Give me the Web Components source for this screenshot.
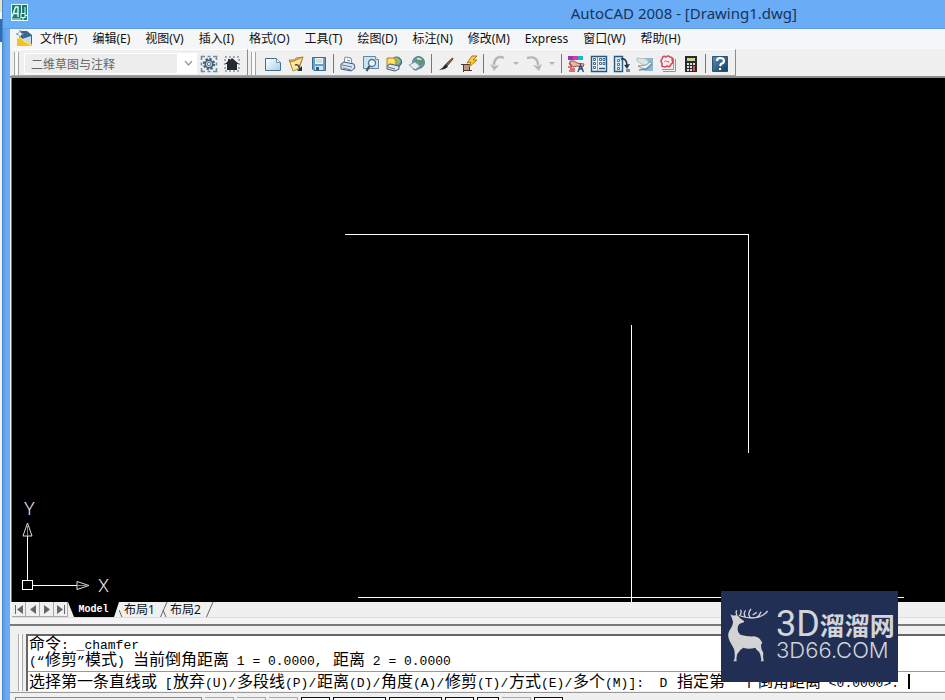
<!DOCTYPE html>
<html lang="zh-CN">
<head>
<meta charset="utf-8">
<title>AutoCAD 2008 - [Drawing1.dwg]</title>
<style>
  html, body { margin: 0; height: 100%; overflow: hidden; }
  body { font: 12px/16px "Noto Sans", "Noto Sans CJK SC", sans-serif; color: #111; background: #eaf3fb; }
</style>
</head>
<body>
<cad-window></cad-window>
<script>
const define = (name, html, setup) => {
  const template = document.createElement('template');
  template.innerHTML = html;
  customElements.define(name, class extends HTMLElement {
    constructor() {
      super();
      this.attachShadow({ mode: 'open' }).append(template.content.cloneNode(true));
    }
    connectedCallback() {
      if (setup && !this.ready) { this.ready = true; setup(this, this.shadowRoot); }
    }
  });
};

const ICONS = {
  app: `<rect x=".5" y=".5" width="16" height="16" fill="#1b7a70" stroke="#dff"/><path d="M1 13 4.500 3H7v10M3 9.500h4" fill="none" stroke="#e6fff8" stroke-width="1.400"/><path d="M10.500 1v8M1 15h9M14 3v6" stroke="#d8f4ee" fill="none"/><rect x="10" y="9.500" width="4" height="4" fill="#126b62" stroke="#fff"/><path d="M14 11.500h3M12 13.500V17" stroke="#fff"/>`,
  doc: `<path d="M5 1h6l5 4v9H5z" fill="#3d668b"/><path d="m6 9 9-3v8H6z" fill="#c4dced"/><path d="M1 8h4l3 3 8 3v2H1z" fill="#f6c21c"/><path d="M1 8h4l3 3 7 4" fill="none" stroke="#fff0a0"/><path d="m4 0 1 3 3 1-3 1-1 3-1-3-3-1 3-1z" fill="#fff" stroke="#4b7ba8" stroke-width=".6"/>`,
  gear: `<path d="M1.500 5V1.500H5M13 1.500h3.500V5M16.500 13v3.500H13M5 16.500H1.500V13M7.500 1.500h3M1.500 7.500v3M16.500 7.500v3M7.500 16.500h3" fill="none" stroke="#6d8da5" stroke-width="1.600"/><circle cx="9" cy="9" r="5" fill="none" stroke="#3e6480" stroke-width="2.400" stroke-dasharray="2.200 1.700"/><circle cx="9" cy="9" r="3.800" fill="#bcd0dd" stroke="#3b5f7c" stroke-width="1.500"/><circle cx="9" cy="9" r="1.600" fill="#f4f8fa" stroke="#5c7a90"/>`,
  home: `<rect x="2" y="2" width="14" height="14" fill="none" stroke="#8b959e" stroke-width="1.500" stroke-dasharray="2 2"/><path d="M2 9 5 6V4h2v1l2-2 7 6h-2v6H4V9z" fill="#252a30"/>`,
  new: `<defs><linearGradient id="n" x2="1" y2="1"><stop stop-color="#fff"/><stop offset="1" stop-color="#a9cfe6"/></linearGradient></defs><path d="M1.500 3.500h11l4 4v8h-15z" fill="url(#n)" stroke="#456f8d"/><path d="M12.500 3.500v4h4" fill="#e9f5fb" stroke="#6a93ad"/>`,
  open: `<path d="M2 5h5l2-2 7-1-4 12H6z" fill="#e9bd55" stroke="#a8883f"/><path d="M3 7 7 6l9-4-5 12-5 2z" fill="#ffe69a" stroke="#b08e3c"/><path d="M8 10c3-1 4 1 5 4" stroke="#3b5058" stroke-width="1.500" fill="none"/><path d="m15 11v5h-5z" fill="#23343c"/>`,
  save: `<path d="M2.500 2.500h13v13H4l-1.500-1.500z" fill="#6c9fc6" stroke="#376b90"/><path d="M5 3h8v6H5z" fill="#eef6fa"/><path d="M6 5h6M6 7h6" stroke="#b3cbd8"/><path d="M5 11h8v4H5z" fill="#d3e4ed"/><path d="M6 12h3v3H6z" fill="#2f5a7a"/>`,
  print: `<path d="m5 8 1-6 6 1 1 6z" fill="#fff" stroke="#6f87a0"/><path d="m2 9 3-2 10 2 1 4-4 3-10-2z" fill="#dbe3ee" stroke="#43597a"/><path d="m3 10 10 2M4 13l8 2M8 5l3 1" stroke="#6279a0"/>`,
  preview: `<path d="M1.500 1.500h12l3 3v9h-15z" fill="#cde5f2" stroke="#5b86a4"/><path d="M13.500 1.500v3h3" fill="#fff" stroke="#6e94ac"/><circle cx="10" cy="8" r="3.500" fill="#e6f6fc" stroke="#587488" stroke-width="1.300"/><path d="m7.500 11-3 5" stroke="#40586a" stroke-width="2.300"/>`,
  publish: `<circle cx="11.500" cy="7" r="5" fill="#5799bd" stroke="#275173"/><path d="m9 3 3-1 4 4-3 4-3-2z" fill="#92ba76"/><path d="M2 3h7l2 3v5H2z" fill="#ffd646" stroke="#b08a2c"/><path d="M4 5h5M4 7h5" stroke="#fff5a8"/><path d="m2 11 3-2 9 2v3l-4 2-8-2z" fill="#dfe6ee" stroke="#43597a"/><path d="m3 12 7 2" stroke="#5b7390"/>`,
  web: `<circle cx="10.500" cy="7.500" r="6" fill="#6a9fba" stroke="#53778f"/><path d="M7 4q4-3 7 0l2 3-3 5-3-1 1-3-4-1z" fill="#5f9571"/><path d="m1 10 6-3 5 4-5 4z" fill="#e4ecf1" stroke="#8ca4b2"/><path d="m5 14 3 1 5-3" stroke="#6e90a4" fill="none" stroke-width="1.500"/><path d="M9 4q3-1 4 1" stroke="#dfefe8" fill="none" stroke-width="1.500"/>`,
  brush: `<path d="m15.500 3-6.500 6 1.500 1.500L16 4z" fill="#8a6a48" stroke="#5a4334"/><path d="m8.500 9 2.500 2.500q-2 3-9 3.500 4-2 6.500-6z" fill="#2b2a29"/>`,
  block: `<rect x="3.500" y="9.500" width="6" height="6" fill="#c79379" stroke="#443b39"/><path d="M1 9.500h3M3.500 16v1M9.500 15.500H12" stroke="#443b39"/><path d="m12 1-5 7 4-1-2 5 8-7h-4l4-4z" fill="#ffd22e" stroke="#a87428"/>`,
  undo: `<path d="M15 3C8 0 5 5 5 10" fill="none" stroke="#b4b6b8" stroke-width="2.400"/><path d="m1 9 4 7 5-6-5 1z" fill="#b4b6b8"/>`,
  redo: `<path d="M2 3c7-2 11 1 11 7" fill="none" stroke="#b4b6b8" stroke-width="2.400"/><path d="m8 10 6 6 3-7-4 2z" fill="#b4b6b8"/>`,
  props: `<path d="M1 1h5v4H1z" fill="#933bb1"/><path d="M6 1h5v4H6z" fill="#ed2ca8"/><path d="M11 1h5v4h-5z" fill="#16bac3"/><path d="M3 6h4l3 2 7 1-1 3-6-1-4 1-3-2z" fill="#eeb79d" stroke="#885451"/><path d="m2 8 3 3M1 12h4M2 16h6M3 14h5" stroke="#cc4949" stroke-width="1.500"/><path d="m11 17 2.500-7 3 7M12 14h4" stroke="#2c4f7e" fill="none" stroke-width="1.500"/>`,
  grid: `<path d="M1.500 1.500h15v15h-15z" fill="#eef6fb" stroke="#28597d" stroke-width="1.400"/><path d="M7.500 2v14" stroke="#7298b2"/><g fill="#fff" stroke="#3f6d90"><path d="M3.500 3.500h2v2h-2zM3.500 7.500h2v2h-2zM3.500 11.500h2v2h-2zM9.500 3.500h2v2h-2zM13 3.500h2v2h-2zM9.500 7.500h2v2h-2zM13 7.500h2v2h-2z"/></g><path d="M9 13.500h6" stroke="#28577a" stroke-width="1.500"/>`,
  palette: `<path d="M1.500 1.500h8v15h-8z" fill="#deedf6" stroke="#285a7e" stroke-width="1.400"/><path d="M4.500 4.500h2v2h-2zM4.500 8.500h2v2h-2zM4.500 12.500h2v2h-2z" fill="#fff" stroke="#4b7899"/><path d="M8 4c4-1 6 2 6 7" fill="none" stroke="#173d5b" stroke-width="1.700"/><path d="m11 10 3 4 3-5" fill="#173d5b"/><path d="M13 14h4v3h-4z" fill="#6c90a8"/>`,
  sheet: `<path d="M5 3h12v13H8z" fill="#8fb8cd"/><path d="m1 3 9 1 4 5-5 2-8-5z" fill="#dce4e7" stroke="#b6c3ca"/><path d="m2 11 8-1 4-3 2 1-3 5-5 1z" fill="#edf4f6" stroke="#7f9aa8"/><path d="m3 15 7-1 6-5" fill="none" stroke="#6b92a9" stroke-width="1.600"/>`,
  cloud: `<path d="M4 16.500h12.500V4M3 14.500h11.500V3" fill="none" stroke="#a58a94"/><path d="M3 11V8q-2-2 0-4 1-4 4-2 2-2 4 0 3 0 2 3 2 3-1 4-1 4-4 2-2 2-5 0z" fill="#fff1f1" stroke="#d64a5f" stroke-width="1.600"/><path d="M5 7q2-3 3 0 2-2 2 1" fill="none" stroke="#df6676"/>`,
  calc: `<path d="M3 1h12v16H3z" fill="#292a2b"/><path d="M5 3h8v3H5z" fill="#c7d493"/><g fill="#ddd"><path d="M5 8h2v2H5zM8 8h2v2H8zM11 8h2v2h-2zM5 11h2v2H5zM8 11h2v2H8zM5 14h2v2H5zM8 14h2v2H8z"/></g><path d="M11 11h2v5h-2z" fill="#d95355"/>`,
  help: `<defs><linearGradient id="h" y2="1" x2="1"><stop stop-color="#5990b0"/><stop offset="1" stop-color="#123d60"/></linearGradient></defs><path d="M1.500 1.500h15v15h-15z" fill="url(#h)" stroke="#2a5578"/><path d="M6 6q0-3 3-3 4 0 4 3 0 2-3 3l-1 2" fill="none" stroke="#fff" stroke-width="2.200"/><path d="M8 13h2v2H8z" fill="#fff"/>`
};

define('cad-icon', `
<style>:host{display:block;width:18px;height:18px;flex:none}svg{display:block}</style>
<svg width="18" height="18" viewBox="0 0 18 18" aria-hidden="true"></svg>`,
(el, root) => { root.querySelector('svg').innerHTML = ICONS[el.getAttribute('name')]; });

define('title-bar', `
<style>
  :host{display:flex;align-items:center;height:29px;box-sizing:border-box;padding:0 148px 2px 11px;background:#6aacf5;color:#16355b;border-bottom:1px solid #5f9ddf}
  h1{margin:0 0 0 auto;font:15px/20px "Noto Sans","Noto Sans CJK SC",sans-serif;white-space:nowrap}
</style>
<cad-icon name="app"></cad-icon><h1><slot></slot></h1>`);

define('menu-bar', `
<style>
  :host{display:block;background:#f5f6f8;height:20px}
  nav{display:flex;align-items:center;gap:15px;height:20px;padding-left:6px}
  button{all:unset;white-space:nowrap;line-height:18px}
  cad-icon{margin-right:-9px}
</style>
<nav><cad-icon name="doc"></cad-icon></nav>`,
(el, root) => {
  for (const label of el.getAttribute('items').split('|')) {
    const b = document.createElement('button');
    b.textContent = label;
    root.querySelector('nav').append(b);
  }
});

define('tool-item', `
<style>
  :host{display:flex;flex:none}
  button{all:unset;display:flex;align-items:center;justify-content:center;width:23px;height:24px}
  .drop{display:none;width:13px}
  :host([menu]) .drop{display:flex}
  .drop::before{content:"";border:3px solid transparent;border-top-color:#b0b2b4;border-bottom:0}
</style>
<button class="main"></button><button class="drop" aria-label="menu"></button>`,
(el, root) => {
  const name = el.getAttribute('name'), icon = document.createElement('cad-icon'), b = root.querySelector('.main');
  icon.setAttribute('name', name);
  b.setAttribute('aria-label', name);
  b.append(icon);
});

define('tool-strip', `
<style>
  :host{display:flex;align-items:center;box-sizing:border-box;height:27px;padding:2px 4px 0 3px;border-top:1px solid #fff;border-right:1px solid #8b8b8b;border-bottom:1px solid #a8a8a8}
  .grip{width:3px;height:23px;border:solid #a3a3a3;border-width:0 1px;flex:none;margin-right:5px;background:#fafafa}
  ::slotted(i){width:1px;height:19px;margin:0 2px 0 3px;background:#777}
</style>
<span class="grip"></span><slot></slot>`);

define('workspace-select', `
<style>
  :host{display:flex;position:relative;width:173px;height:21px}
  select{appearance:none;width:100%;height:21px;box-sizing:border-box;margin:0;padding:0 20px 0 6px;border:1px solid #fff;border-radius:0;background:linear-gradient(90deg,#ededed calc(100% - 19px),#fff 0);color:#666;font:12px/19px "Noto Sans CJK SC",sans-serif;opacity:1}
  svg{position:absolute;right:4px;top:7px;pointer-events:none}
</style>
<select aria-label="工作空间"><option>二维草图与注释</option></select>
<svg width="9" height="7"><path d="m1 1 3.500 4L8 1" fill="none" stroke="#999" stroke-width="1.300"/></svg>`);

define('tool-bar', `
<style>
  :host{display:flex;height:29px;box-sizing:border-box;background:#f0f0f0;border-bottom:2px solid #8d8d8d;padding-left:1px}
</style>
<tool-strip><workspace-select></workspace-select><tool-item name="gear"></tool-item><tool-item name="home"></tool-item></tool-strip>
<tool-strip>
  <tool-item name="new"></tool-item><tool-item name="open"></tool-item><tool-item name="save"></tool-item><i></i>
  <tool-item name="print"></tool-item><tool-item name="preview"></tool-item><tool-item name="publish"></tool-item><tool-item name="web"></tool-item><i></i>
  <tool-item name="brush"></tool-item><tool-item name="block"></tool-item><i></i>
  <tool-item name="undo" menu></tool-item><tool-item name="redo" menu></tool-item><i></i>
  <tool-item name="props"></tool-item><tool-item name="grid"></tool-item><tool-item name="palette"></tool-item><tool-item name="sheet"></tool-item><tool-item name="cloud"></tool-item><tool-item name="calc"></tool-item><i></i>
  <tool-item name="help"></tool-item>
</tool-strip>`);

define('drawing-canvas', `
<style>
  :host{display:flex;position:relative;flex:1;min-height:0;background:#000;border-left:1px solid #777;margin-left:1px;overflow:hidden}
  svg{display:block}
  .model{flex:1}
  .ucs{position:absolute;left:0;bottom:0}
  text{font:300 18px Roboto,sans-serif;fill:#e8e8e8}
</style>
<svg class="model" shape-rendering="crispEdges" stroke="#fff" fill="none">
  <path d="M333 156.500h404M736.500 156v219M619.500 247v277M346 519.500h546"/>
</svg>
<svg class="ucs" width="110" height="106" stroke="#fff" fill="none">
  <path shape-rendering="crispEdges" d="M10.500 84.500h10v9h-10zM15.500 84V40M21 89.500h44"/>
  <path d="m11 40 4.500-13L20 40zM65 85.500l12 4-12 4z" stroke="#ddd"/><path d="M15.500 30v10M65 89.500h9" stroke="#888"/>
  <text x="12" y="19" stroke="none">Y</text><text x="86" y="96" stroke="none">X</text>
</svg>`);

define('layout-tabs', `
<style>
  :host{display:flex;height:15px;background:#f0f0f0;margin-left:2px;border-bottom:1px solid #ddd}
  button{all:unset;box-sizing:border-box;height:15px;line-height:15px}
  .nav{width:14px;border:solid #aaa;border-width:0 1px 1px 0;display:flex;align-items:center;justify-content:center}
  .model{width:51px;background:#000;color:#fff;text-align:center;font:bold 10px/15px "Liberation Mono",monospace;clip-path:polygon(0 0,100% 0,calc(100% - 5px) 100%,6px 100%)}
  .tab{font:12px/15px "Noto Sans","Noto Sans CJK SC",sans-serif;margin-right:4px}
  svg{flex:none;display:block}
  path{fill:none;stroke:#666}
  .nav path + path, .nav path:only-child{fill:#666;stroke:none}
</style>
<button class="nav" aria-label="first"><svg width="10" height="9"><path d="M1.500 0v9"/><path d="M9 0v9L3 4.500z"/></svg></button>
<button class="nav" aria-label="previous"><svg width="6" height="9"><path d="M6 0v9L0 4.500z"/></svg></button>
<button class="nav" aria-label="next"><svg width="6" height="9"><path d="M0 0v9l6-4.500z"/></svg></button>
<button class="nav" aria-label="last"><svg width="10" height="9"><path d="M8.500 0v9"/><path d="M1 0v9l6-4.500z"/></svg></button>
<button class="model">Model</button>
<svg width="5" height="15"><path d="m0 8 3 7"/></svg>
<button class="tab">布局1</button><svg width="11" height="15"><path d="M8 0 1.500 15M4 8l3 7"/></svg>
<button class="tab">布局2</button><svg width="9" height="15"><path d="M8 0 1.500 15"/></svg>`);

/* Terminal text: every run of Latin or Han characters occupies whole 8px cells. */
define('term-line', `
<style>
  :host{display:flex;align-items:baseline;height:16px;white-space:pre;color:#000}
  span{flex:none;width:calc(var(--cells)*8px);font:13px/16px "Liberation Mono",monospace}
  .han{font:16px/12px "Noto Sans CJK SC",sans-serif}
</style>`,
(el, root) => {
  for (const run of el.textContent.match(/[\u4e00-\u9fff]+|[^\u4e00-\u9fff]+/g)) {
    const han = /[\u4e00-\u9fff]/.test(run), s = document.createElement('span');
    if (han) s.className = 'han';
    s.style.setProperty('--cells', run.length * (han ? 2 : 1));
    s.textContent = run;
    root.append(s);
  }
});

define('command-panel', `
<style>
  :host{display:flex;box-sizing:border-box;margin-top:6px;height:69px;border-top:2px solid #7a7a7a;border-bottom:1px solid #999;background:#f0f0f0;padding:8px 0 1px 8px}
  .grip{width:3px;border:solid #aaa;border-width:0 1px;margin-right:3px;background:#fafafa}
  .box{flex:1;background:#fff;border:solid #666;border-width:2px 0 0 2px;min-width:0}
  .history{padding:0 0 3px 1px;border-bottom:1px solid #999}
  .prompt{display:flex;padding:2px 0 2px 1px}
  .caret{width:2px;height:15px;margin-left:7px;background:#000}
</style>
<div class="grip"></div>
<div class="box">
  <div class="history"><term-line>命令: _chamfer</term-line><term-line>(“修剪”模式) 当前倒角距离 1 = 0.0000, 距离 2 = 0.0000</term-line></div>
  <div class="prompt"><term-line>选择第一条直线或 [放弃(U)/多段线(P)/距离(D)/角度(A)/修剪(T)/方式(E)/多个(M)]:  D 指定第一个倒角距离 &lt;0.0000&gt;:</term-line><span class="caret"></span></div>
</div>`);

define('status-bar', `
<style>
  :host{display:flex;gap:3px;height:7px;box-sizing:border-box;padding:4px 0 0 5px;background:#f0f0f0;overflow:hidden}
  span{flex:none;box-sizing:border-box;height:16px;border:1px solid #aaa;border-width:1px 1px 0 0}
  .coord{width:187px;border-color:#888;border-left-width:1px}
  .s{width:29px}.m{width:22px}.l{width:53px}
  .on{border-color:#111;border-left-width:1px;background:#fafafa}
</style>
<span class="coord"></span><span class="s"></span><span class="s"></span><span class="s"></span><span class="s on"></span><span class="l on"></span><span class="l on"></span><span class="s on"></span><span class="m on"></span><span class="s"></span><span class="s on"></span>`);

define('site-badge', `
<style>
  :host{display:flex;align-items:center;gap:8px;box-sizing:border-box;width:177px;height:91px;padding:0 0 4px 7px;background:#222f55;color:#d3d5d9}
  svg{flex:none}
  .words{display:flex;flex-direction:column;padding-bottom:4px}
  .top{display:flex;align-items:center;height:34px}
  .latin{font:36px/36px Roboto,sans-serif}
  .han{font:bold 25px/28px "Noto Sans CJK SC",sans-serif}
  .bottom{font:300 22px/18px Inter,sans-serif}
</style>
<svg width="40" height="54" viewBox="38 68 120 160" fill="#d3d3d3">
  <path d="M45 86Q55 92 62 88 70 90 74 98L87 107Q86 112 78 112 70 114 68 122 64 140 75 147 95 153 115 152 132 154 137 165 142 170 140 176L137 174Q137 186 139 192 146 200 143 212L145 227H136L138 222Q137 208 131 198 122 192 120 186 100 192 84 186 72 192 66 205 62 215 64 227H54L57 222Q60 205 56 190 50 178 44 168 34 150 42 135 56 115 52 105 50 97 45 86Z"/>
  <path d="M66 90Q60 82 64 74M71 91Q80 86 76 72M75 91Q88 96 110 97 142 96 157 76M91 94Q82 84 91 74M105 96Q95 84 107 70M123 96Q133 90 137 78M112 88l12-8" fill="none" stroke="#d3d3d3" stroke-width="4"/>
</svg>
<div class="words"><div class="top"><span class="latin">3D</span><span class="han">溜溜网</span></div><div class="bottom">3D66.COM</div></div>`);

define('cad-window', `
<style>
  :host{display:flex;position:relative;height:100vh}
  .behind{width:2px;background:linear-gradient(#e9e4bf 12px,#eef5fb 12px 19px,#2b6eb8 19px 42px,#eef5fb 42px)}
  .edge{width:1px;background:#4a86c8}
  .frame{width:7px;background:linear-gradient(90deg,#5b9ee8,#6aacf5 60%)}
  main{flex:1;min-width:0;display:flex;flex-direction:column;background:#f4f4f4}
  title-bar{margin-left:-7px;padding-left:8px}
  site-badge{position:absolute;right:47px;bottom:18px}
</style>
<div class="behind"></div><div class="edge"></div><div class="frame"></div>
<main>
  <title-bar>AutoCAD 2008 - [Drawing1.dwg]</title-bar>
  <menu-bar items="文件(F)|编辑(E)|视图(V)|插入(I)|格式(O)|工具(T)|绘图(D)|标注(N)|修改(M)|Express|窗口(W)|帮助(H)"></menu-bar>
  <tool-bar></tool-bar>
  <drawing-canvas></drawing-canvas>
  <layout-tabs></layout-tabs>
  <command-panel></command-panel>
  <status-bar></status-bar>
</main>
<site-badge></site-badge>`);
</script>
</body>
</html>
